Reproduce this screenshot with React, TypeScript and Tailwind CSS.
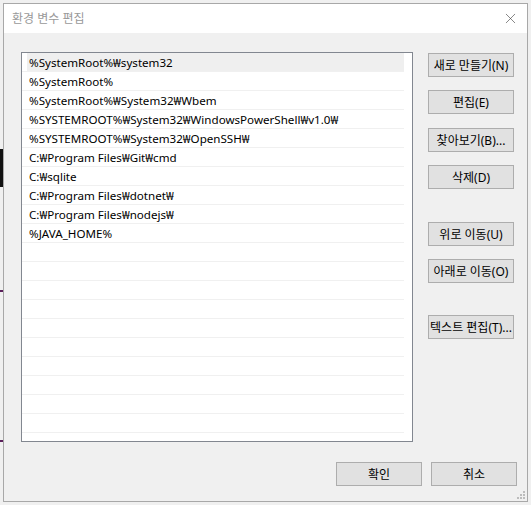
import { X } from 'lucide-react';

const paths = [
  '%SystemRoot%₩system32',
  '%SystemRoot%',
  '%SystemRoot%₩System32₩Wbem',
  '%SYSTEMROOT%₩System32₩WindowsPowerShell₩v1.0₩',
  '%SYSTEMROOT%₩System32₩OpenSSH₩',
  'C:₩Program Files₩Git₩cmd',
  'C:₩sqlite',
  'C:₩Program Files₩dotnet₩',
  'C:₩Program Files₩nodejs₩',
  '%JAVA_HOME%',
];

const rows = [...paths, ...Array(11).fill('')];

const font = "font-['Noto_Sans','Noto_Sans_CJK_KR',sans-serif]";

function WinButton({ label, className = '' }: { label: string; className?: string }) {
  return (
    <button
      type="button"
      className={`h-[24px] w-[86px] border border-[#adadad] bg-[#e1e1e1] pt-[1px] text-[12px] leading-none text-black ${className}`}
    >
      {label}
    </button>
  );
}

export default function App() {
  return (
    <div className={`relative h-[505px] w-[531px] overflow-hidden bg-[#f0f0f0] pl-[3px] pt-[3px] ${font}`}>
      {/* 뒤쪽 창 조각 */}
      <div className="absolute left-0 top-[149px] h-[38px] w-[3px] bg-[#111]" />
      <div className="absolute left-0 top-[290px] h-[2px] w-[3px] bg-[#5b1f5b]" />
      <div className="absolute left-0 top-[440px] h-[2px] w-[3px] bg-[#5b1f5b]" />

      {/* 대화상자 */}
      <div className="relative flex h-[499px] w-[525px] flex-col border border-[#a8a8a8] bg-[#f0f0f0]">
        {/* 제목 표시줄 */}
        <div className="flex h-[29px] items-center justify-between bg-white pl-[8px] pr-[2px]">
          <span className="pt-[1px] text-[12px] text-[#999]">환경 변수 편집</span>
          <span className="flex h-[29px] w-[30px] items-center justify-center text-[#444]">
            <X size={17} strokeWidth={0.9} />
          </span>
        </div>

        {/* 본문 */}
        <div className="flex flex-1 flex-col pl-[17px] pt-[19px]">
          <div className="flex">
            {/* 목록 */}
            <div className="h-[390px] w-[392px] overflow-hidden border border-[#828790] bg-white pr-[8px]">
              {rows.map((p, i) => (
                <div key={i} className="h-[19px] border-b border-[#f0f0f0]">
                  <div
                    className={`ml-[5px] flex h-[18px] items-center pl-[2px] pt-[2px] text-[11.6px] text-black ${
                      i === 0 ? 'bg-[#efefef]' : ''
                    }`}
                  >
                    {p}
                  </div>
                </div>
              ))}
            </div>

            {/* 오른쪽 버튼 */}
            <div className="ml-[15px] flex flex-col pt-[1px]">
              <WinButton label="새로 만들기(N)" className="border-[#9c9c9c]" />
              <WinButton label="편집(E)" className="mt-[13px]" />
              <WinButton label="찾아보기(B)..." className="mt-[14px]" />
              <WinButton label="삭제(D)" className="mt-[13px]" />
              <WinButton label="위로 이동(U)" className="mt-[33px]" />
              <WinButton label="아래로 이동(O)" className="mt-[13px]" />
              <WinButton label="텍스트 편집(T)..." className="mt-[32px]" />
            </div>
          </div>

          {/* 확인 / 취소 */}
          <div className="mt-[20px] flex justify-end gap-[9px] pr-[10px]">
            <WinButton label="확인" />
            <WinButton label="취소" />
          </div>
        </div>

        {/* 크기 조절 손잡이 */}
        <div className="absolute bottom-[2px] right-[2px] grid grid-cols-3 gap-[1px]">
          {[0, 0, 1, 0, 1, 1, 1, 1, 1].map((v, i) => (
            <span key={i} className={`h-[2px] w-[2px] ${v ? 'bg-[#bcbcbc]' : ''}`} />
          ))}
        </div>
      </div>
    </div>
  );
}
